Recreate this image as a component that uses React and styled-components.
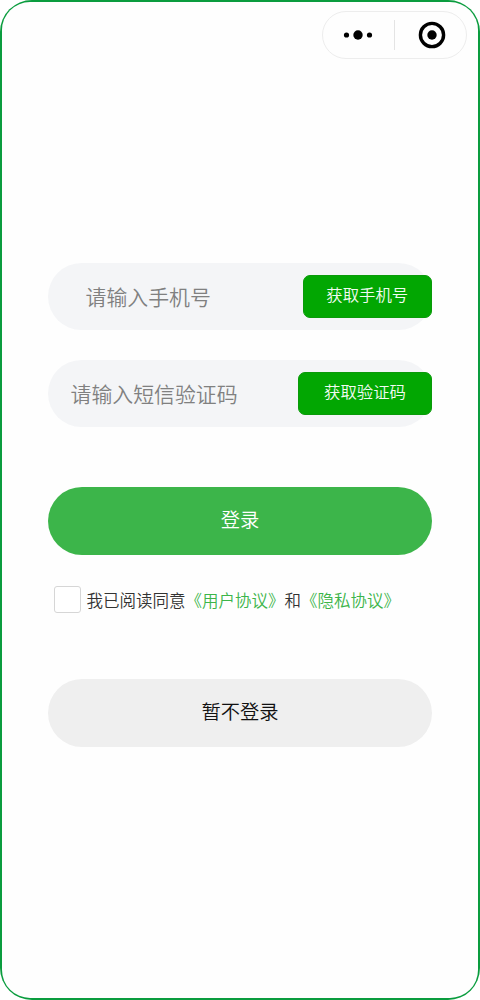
import React from "react";
import styled, { createGlobalStyle } from "styled-components";

const GlobalStyle = createGlobalStyle`
  * {
    box-sizing: border-box;
  }
  body {
    margin: 0;
    background-color: #fff;
    font-family: "Noto Sans CJK SC", sans-serif;
    font-weight: 350;
  }
  button {
    font-family: inherit;
    font-weight: inherit;
    padding: 0;
    border: none;
  }
`;

const Frame = styled.div`
  width: 480px;
  height: 1000px;
  padding: 2px;
  border-radius: 32px;
  background-color: #0a9c3e;
`;

const Screen = styled.div`
  display: flex;
  flex-direction: column;
  height: 100%;
  padding: 9px 11px 0 46px;
  border-radius: 28px;
  background-color: #fefefe;
`;

const Capsule = styled.div`
  display: flex;
  align-items: center;
  align-self: flex-end;
  width: 145px;
  height: 48px;
  border: 1px solid #ededed;
  border-radius: 24px;
`;

const MenuItem = styled.div`
  display: flex;
  justify-content: center;
  width: 71px;
  padding-right: 1px;
`;

const CloseItem = styled.div`
  display: flex;
  flex: 1;
  justify-content: center;
  padding-left: 2px;
`;

const Divider = styled.div`
  width: 1px;
  height: 30px;
  background-color: #e4e4e4;
`;

const Form = styled.div`
  display: flex;
  flex-direction: column;
  width: 384px;
  margin-top: 204px;
`;

const Field = styled.div`
  display: flex;
  align-items: center;
  justify-content: space-between;
  height: 67px;
  margin-bottom: 30.4px;
  padding-left: ${({ $indent }) => $indent}px;
  border-radius: 33.5px;
  background-color: #f4f5f7;
`;

const Placeholder = styled.span`
  margin-bottom: 2px;
  font-size: 20.9px;
  line-height: 30px;
  color: #808080;
`;

const CodeButton = styled.button`
  width: ${({ $width }) => $width}px;
  height: 43px;
  padding-bottom: 6px;
  border: 1px solid #0a9a0a;
  border-radius: 7px;
  background-color: #02a702;
  color: #f2fbf2;
  font-size: 16.4px;
  line-height: 24px;
`;

const PillButton = styled.button`
  height: 67.5px;
  padding-bottom: 4px;
  border-radius: 34px;
  font-size: 19.3px;
  line-height: 28px;
`;

const LoginButton = styled(PillButton)`
  margin-top: 29.3px;
  background-color: #3cb54a;
  color: #fff;
`;

const SkipButton = styled(PillButton)`
  margin-top: 65.9px;
  background-color: #efefef;
  color: #111;
`;

const Agreement = styled.div`
  display: flex;
  align-items: center;
  height: 27px;
  margin-top: 31.8px;
  padding-left: 6px;
`;

const Checkbox = styled.div`
  width: 27px;
  height: 27px;
  margin-right: 5.5px;
  border: 1px solid #d6d6d6;
  border-radius: 3px;
  background-color: #fff;
`;

const AgreementText = styled.span`
  font-size: 16.5px;
  line-height: 24px;
  white-space: nowrap;
  color: #333;
`;

const Link = styled.span`
  color: #3cb54a;
`;

const fields = [
  { placeholder: "请输入手机号", action: "获取手机号", indent: 37.5, width: 129.5 },
  { placeholder: "请输入短信验证码", action: "获取验证码", indent: 22.5, width: 134 },
];

function MenuIcon() {
  return (
    <svg width="30" height="12" viewBox="0 0 30 12">
      <circle cx="3.5" cy="6" r="2.6" />
      <circle cx="15" cy="6" r="4.7" />
      <circle cx="26.5" cy="6" r="2.6" />
    </svg>
  );
}

function CloseIcon() {
  return (
    <svg width="28" height="28" viewBox="0 0 28 28">
      <circle cx="14" cy="14" r="11.6" fill="none" stroke="#000" strokeWidth="3.4" />
      <circle cx="14" cy="14" r="4.7" />
    </svg>
  );
}

function App() {
  return (
    <>
      <GlobalStyle />
      <Frame>
        <Screen>
          <Capsule>
            <MenuItem>
              <MenuIcon />
            </MenuItem>
            <Divider />
            <CloseItem>
              <CloseIcon />
            </CloseItem>
          </Capsule>
          <Form>
            {fields.map(({ placeholder, action, indent, width }) => (
              <Field key={action} $indent={indent}>
                <Placeholder>{placeholder}</Placeholder>
                <CodeButton $width={width}>{action}</CodeButton>
              </Field>
            ))}
            <LoginButton>登录</LoginButton>
            <Agreement>
              <Checkbox />
              <AgreementText>
                我已阅读同意<Link>《用户协议》</Link>和<Link>《隐私协议》</Link>
              </AgreementText>
            </Agreement>
            <SkipButton>暂不登录</SkipButton>
          </Form>
        </Screen>
      </Frame>
    </>
  );
}

export default App;
